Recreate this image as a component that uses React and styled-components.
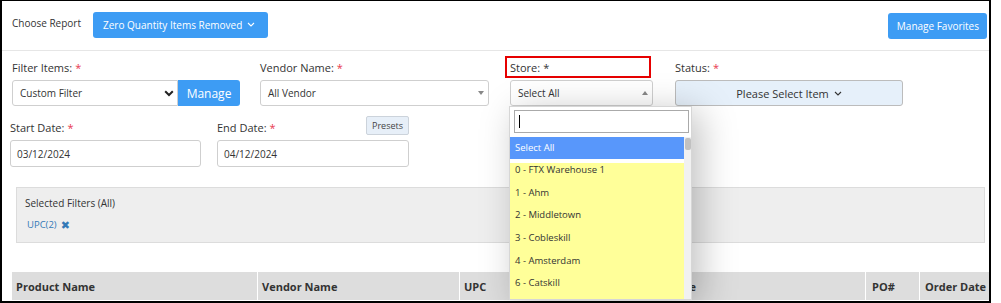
import React from 'react';
import styled, { createGlobalStyle } from 'styled-components';

const GlobalStyle = createGlobalStyle`
  body {
    margin: 0;
    background: #fff;
    font-family: "Open Sans", "DejaVu Sans", sans-serif;
  }
`;

const Frame = styled.div`
  box-sizing: border-box;
  width: 991px;
  height: 303px;
  border: 2px solid #000;
  border-top-width: 1px;
  overflow: hidden;
  color: #333;
`;

const TopBar = styled.div`
  display: flex;
  align-items: center;
  justify-content: space-between;
  height: 49px;
  padding: 0 2px 0 10px;
  border-bottom: 1px solid #e6e6e6;
`;

const ReportPicker = styled.div`
  display: flex;
  align-items: center;
  gap: 12px;
  font-size: 10px;
  margin-top: -2px;
`;

const Caption = styled.span`
  margin-bottom: 4px;
`;

const BlueButton = styled.button`
  display: inline-flex;
  align-items: center;
  gap: 5px;
  height: 26px;
  padding: ${p => p.$pad || '0 13px 0 10px'};
  border: none;
  border-radius: 3px;
  background: #3d9cf4;
  color: #fff;
  font-family: inherit;
  font-size: 10px;
  cursor: pointer;
`;

const Row = styled.div`
  display: flex;
  padding-left: ${p => p.$left}px;
  margin-top: ${p => p.$top}px;
`;

const Field = styled.div`
  position: relative;
  width: ${p => p.$w}px;
  margin-right: ${p => p.$gap || 0}px;
`;

const Label = styled.div`
  box-sizing: border-box;
  display: flex;
  align-items: center;
  height: 22px;
  font-size: 11px;
  color: #333;
  border: 2px solid ${p => (p.$marked ? '#e60000' : 'transparent')};
  border-left-width: ${p => (p.$marked ? 2 : 0)}px;
  border-right-width: ${p => (p.$marked ? 2 : 0)}px;
  margin-left: ${p => (p.$marked ? -5 : 0)}px;
  padding-left: ${p => (p.$marked ? 3 : 0)}px;
  width: ${p => (p.$marked ? '146px' : 'auto')};
  b {
    font-weight: normal;
    color: ${p => (p.$marked ? '#333' : '#e8384f')};
    margin-left: 3px;
  }
`;

const LabelLine = styled.div`
  display: flex;
  align-items: center;
  justify-content: space-between;
`;

const Presets = styled.span`
  display: inline-flex;
  align-items: center;
  height: 17px;
  padding: 0 5px;
  font-size: 9px;
  color: #444;
  background: #e7eff8;
  border: 1px solid #ccd3db;
  border-radius: 2px;
  margin-top: -3px;
`;

const Box = styled.div`
  box-sizing: border-box;
  display: flex;
  align-items: center;
  justify-content: space-between;
  height: ${p => p.$h || 26}px;
  margin-top: 2px;
  padding: 0 4px 0 ${p => p.$pl || 7}px;
  font-size: 10px;
  color: #333;
  background: #fff;
  border: 1px solid #cfcfcf;
  border-radius: 3px;
`;

const Combo = styled.div`
  display: flex;
  margin-top: 2px;
`;

const NativeSelect = styled(Box)`
  margin-top: 0;
  flex: 1;
  padding-right: 3px;
  border-radius: 3px 0 0 3px;
`;

const ManageButton = styled(BlueButton)`
  justify-content: center;
  width: 62px;
  height: 26px;
  border-radius: 0 3px 3px 0;
  padding: 0;
  font-size: 12px;
`;

const Caret = styled.span`
  width: 0;
  height: 0;
  border-left: 3.5px solid transparent;
  border-right: 3.5px solid transparent;
  border-top: ${p => (p.$up ? 'none' : '4px solid #888')};
  border-bottom: ${p => (p.$up ? '4px solid #888' : 'none')};
`;

const StatusButton = styled.div`
  box-sizing: border-box;
  display: flex;
  align-items: center;
  justify-content: center;
  gap: 5px;
  height: 26px;
  margin-top: 2px;
  background: #e6f0fa;
  border: 1px solid #bcbcbc;
  border-radius: 3px;
  font-size: 11px;
  color: #333;
`;

const Dropdown = styled.div`
  position: absolute;
  z-index: 5;
  left: -1px;
  top: 50px;
  width: 181px;
  height: 192px;
  background: #fff;
  border: 1px solid #d6d6d6;
  box-shadow: 8px 6px 34px rgba(0, 0, 0, 0.25);
  overflow: hidden;
`;

const SearchWrap = styled.div`
  padding: 3px 2px 4px 4px;
`;

const Search = styled.div`
  box-sizing: border-box;
  height: 23px;
  border: 1px solid #aaa;
  display: flex;
  align-items: center;
  padding-left: 4px;
  &::before {
    content: '';
    width: 1px;
    height: 13px;
    background: #000;
  }
`;

const ListArea = styled.div`
  display: flex;
`;

const Options = styled.div`
  width: 174px;
`;

const Option = styled.div`
  box-sizing: border-box;
  height: ${p => (p.$active ? 22 : 22.66)}px;
  line-height: ${p => (p.$active ? 22 : 14)}px;
  padding-left: 5px;
  font-size: 9.5px;
  color: ${p => (p.$active ? '#fff' : '#333')};
  background: ${p => (p.$active ? '#5897fb' : '#ffff99')};
  margin-bottom: ${p => (p.$active ? 4 : 0)}px;
`;

const Track = styled.div`
  width: 7px;
  background: #f1f1f1;
  padding-top: 1px;
  &::before {
    content: '';
    display: block;
    width: 6px;
    height: 12px;
    margin-left: 1px;
    border-radius: 2px;
    background: #c1c1c1;
  }
`;

const Panel = styled.div`
  box-sizing: border-box;
  margin: 20px 4px 0 14px;
  height: 56px;
  padding: 8px 8px;
  background: #eeeeee;
  border: 1px solid #dcdcdc;
  font-size: 10px;
  color: #333;
`;

const Chip = styled.div`
  display: flex;
  align-items: center;
  gap: 4px;
  margin-top: 7px;
  padding-left: 2px;
  font-size: 9.5px;
  color: #3479b7;
  b {
    font-size: 11px;
    color: #3479b7;
  }
`;

const TableHead = styled.div`
  display: flex;
  margin: 29px 0 0 10px;
  height: 28px;
  background: #dddddd;
`;

const HeadCell = styled.div`
  box-sizing: border-box;
  display: flex;
  align-items: center;
  width: ${p => p.$w}px;
  padding-left: ${p => p.$pl || 4}px;
  border-right: 1px solid #fff;
  font-size: 11px;
  font-weight: bold;
  color: #333;
  white-space: nowrap;
  &:last-child {
    border-right: none;
  }
`;

const Chevron = () => (
  <svg width="8" height="5" viewBox="0 0 8 5">
    <path d="M1 1 L4 4 L7 1" fill="none" stroke="currentColor" strokeWidth="1.1" />
  </svg>
);

const BoldChevron = () => (
  <svg width="10" height="7" viewBox="0 0 10 7">
    <path d="M1.2 1.3 L5 5 L8.8 1.3" fill="none" stroke="#222" strokeWidth="2" />
  </svg>
);

const stores = [
  '0 - FTX Warehouse 1',
  '1 - Ahm',
  '2 - Middletown',
  '3 - Cobleskill',
  '4 - Amsterdam',
  '6 - Catskill',
];

export default function App() {
  return (
    <>
      <GlobalStyle />
      <Frame>
        <TopBar>
          <ReportPicker>
            <Caption>Choose Report</Caption>
            <BlueButton>
              Zero Quantity Items Removed <Chevron />
            </BlueButton>
          </ReportPicker>
          <BlueButton $pad="0 8px 0 9px">Manage Favorites</BlueButton>
        </TopBar>

        <Row $left={10} $top={5}>
          <Field $w={228} $gap={20}>
            <Label>Filter Items:<b>*</b></Label>
            <Combo>
              <NativeSelect>
                Custom Filter <BoldChevron />
              </NativeSelect>
              <ManageButton>Manage</ManageButton>
            </Combo>
          </Field>
          <Field $w={229} $gap={21}>
            <Label>Vendor Name:<b>*</b></Label>
            <Box>
              All Vendor <Caret />
            </Box>
          </Field>
          <Field $w={143} $gap={22}>
            <Label $marked>Store:<b>*</b></Label>
            <Box>
              Select All <Caret $up />
            </Box>
            <Dropdown>
              <SearchWrap>
                <Search />
              </SearchWrap>
              <ListArea>
                <Options>
                  <Option $active>Select All</Option>
                  {stores.map(s => (
                    <Option key={s}>{s}</Option>
                  ))}
                </Options>
                <Track />
              </ListArea>
            </Dropdown>
          </Field>
          <Field $w={228}>
            <Label>Status:<b>*</b></Label>
            <StatusButton>
              Please Select Item <Chevron />
            </StatusButton>
          </Field>
        </Row>

        <Row $left={8} $top={10}>
          <Field $w={191} $gap={16}>
            <Label>Start Date:<b>*</b></Label>
            <Box $h={27} $pl={6}>03/12/2024</Box>
          </Field>
          <Field $w={192}>
            <LabelLine>
              <Label>End Date:<b>*</b></Label>
              <Presets>Presets</Presets>
            </LabelLine>
            <Box $h={27} $pl={6}>04/12/2024</Box>
          </Field>
        </Row>

        <Panel>
          Selected Filters (All)
          <Chip>
            UPC(2) <b>✖</b>
          </Chip>
        </Panel>

        <TableHead>
          <HeadCell $w={246}>Product Name</HeadCell>
          <HeadCell $w={202}>Vendor Name</HeadCell>
          <HeadCell $w={140}>UPC</HeadCell>
          <HeadCell $w={266} $pl={31}>Store Name</HeadCell>
          <HeadCell $w={54} $pl={6}>PO#</HeadCell>
          <HeadCell $w={67} $pl={5}>Order Date</HeadCell>
        </TableHead>
      </Frame>
    </>
  );
}
